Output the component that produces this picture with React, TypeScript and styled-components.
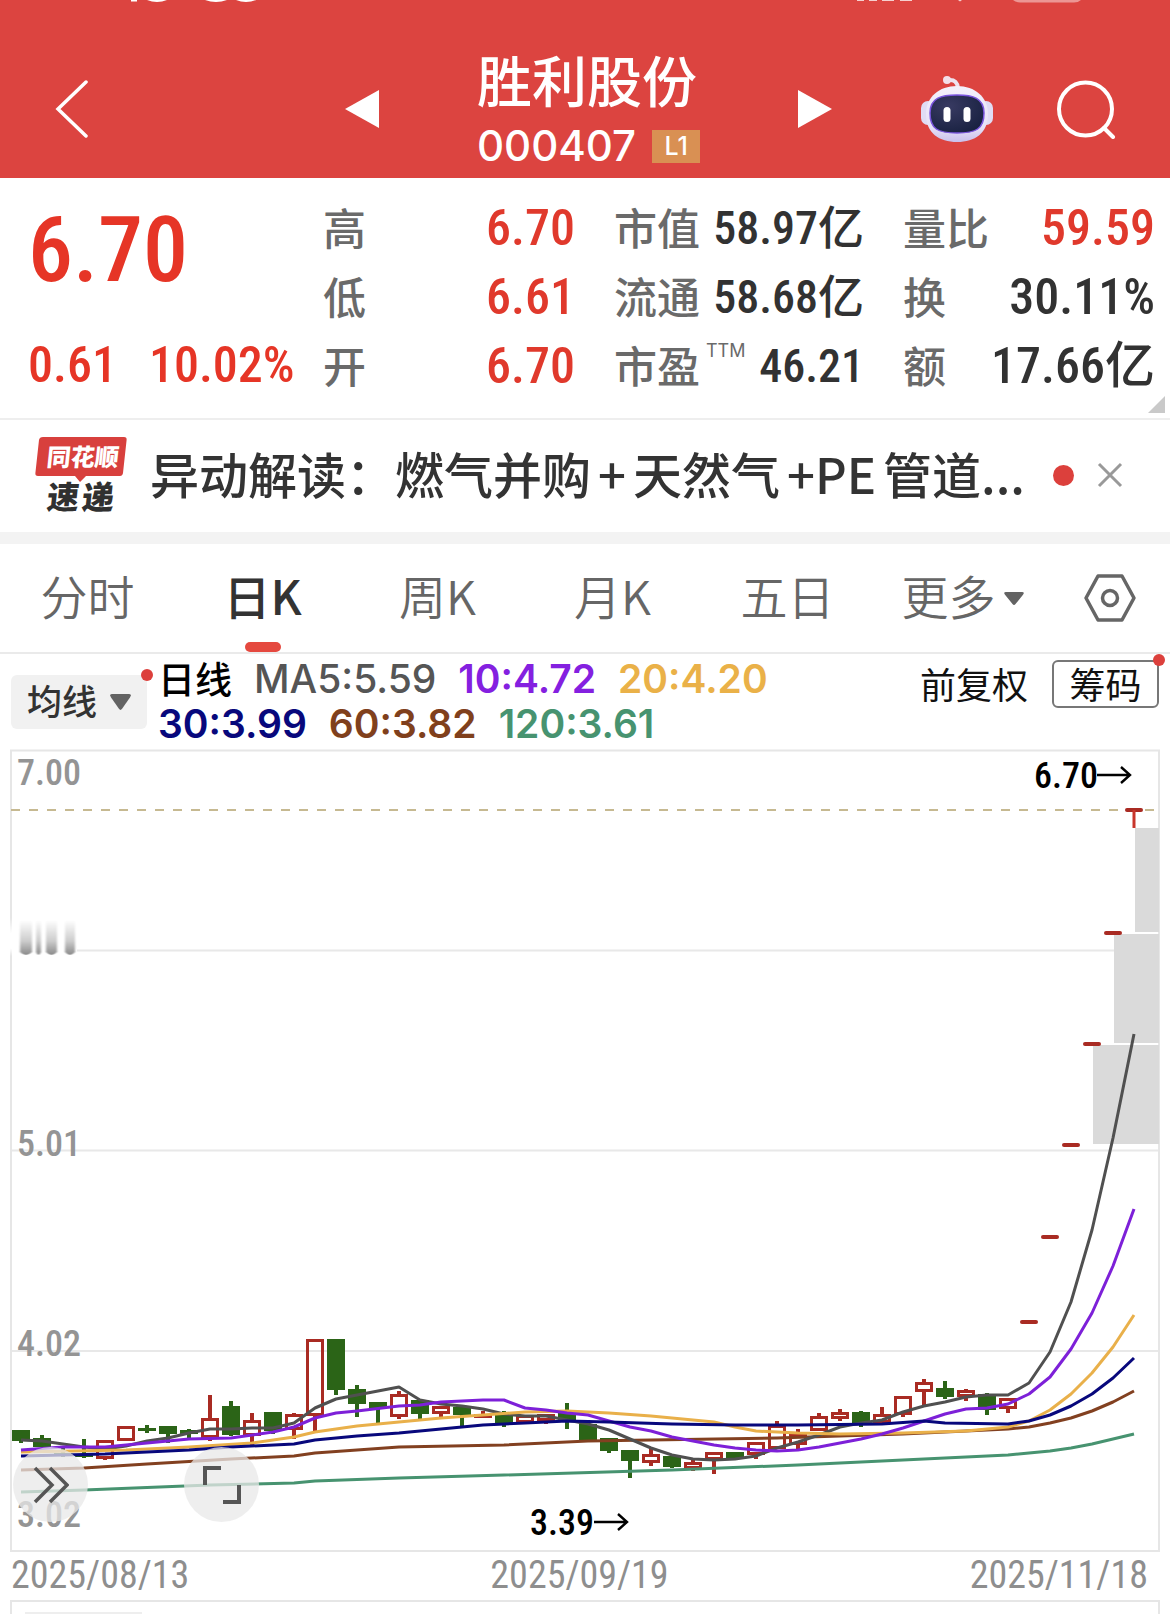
import React from "react";
import styled, { createGlobalStyle } from "styled-components";

const cjk = `"Noto Sans CJK SC", sans-serif`;
const num = `"Roboto Condensed", "Liberation Sans Narrow", Roboto, "Noto Sans CJK SC", sans-serif`;
const ui = `Inter, "Noto Sans CJK SC", sans-serif`;

const Global = createGlobalStyle`
  *, *::before, *::after { box-sizing: border-box; }
  body { margin: 0; background: #fff; font-family: ${cjk}; color: #333; }
  h1, dl, dd, dt, p { margin: 0; font-weight: inherit; }
  button, select { font: inherit; color: inherit; background: none; border: 0; padding: 0; cursor: pointer; }
  a { color: inherit; text-decoration: none; }
  svg { display: block; }
`;

/* ---------- header ---------- */
const Header = styled.header`
  background: #dc4440;
  color: #fff;
  height: 178px;
`;
const StatusBar = styled.div`
  height: 40px;
`;
const NavBar = styled.nav`
  height: 138px;
  padding: 0 53px 0 55px;
  display: grid;
  grid-template-columns: 290px 34px 1fr 122px 137px 60px;
  align-items: center;
`;
const IconButton = styled.button`
  display: flex;
  align-items: center;
`;
const TitleBlock = styled.div`
  justify-self: center;
  display: grid;
  gap: 20px;
  padding-bottom: 6px;
`;
const StockName = styled.h1`
  font-size: 55px;
  line-height: 60px;
  font-weight: 500;
`;
const CodeRow = styled.div`
  display: flex;
  align-items: center;
  gap: 16px;
  font: 500 42px/36px ${ui};
`;
const Badge = styled.span`
  width: 48px;
  height: 33px;
  background: #d99053;
  font-size: 25px;
  line-height: 33px;
  text-align: center;
`;

/* ---------- quote ---------- */
const Quote = styled.section`
  position: relative;
  display: grid;
  grid-template-columns: minmax(0, 256fr) 252fr 250fr 252fr;
  column-gap: 39px;
  padding: 15px 15px 18px 28px;
  border-bottom: 2px solid #eee;
`;
const PriceBlock = styled.div`
  display: grid;
  grid-template-rows: 116px 1fr;
  align-items: center;
  color: #e63526;
  font-family: ${num};
  font-weight: 500;
`;
const Price = styled.strong`
  font-size: 90px;
  line-height: 100px;
  font-weight: 500;
`;
const Change = styled.p`
  display: flex;
  align-self: end;
  gap: 32px;
  margin-bottom: 5px;
  font-size: 50px;
  line-height: 60px;
  white-space: nowrap;
`;
const Figures = styled.dl`
  display: grid;
  grid-auto-rows: 69px;
`;
const Figure = styled.div`
  display: flex;
  align-items: center;
  justify-content: space-between;
`;
const Label = styled.dt`
  padding-bottom: 4px;
  font-size: 43px;
  line-height: 60px;
  font-weight: 500;
  color: #6a6a6a;
  white-space: nowrap;
`;
const Sup = styled.sup`
  font: 400 18px/18px ${ui};
  margin-left: 6px;
  vertical-align: 26px;
`;
const Value = styled.dd<{ $up?: boolean; $small?: boolean }>`
  font-family: ${num};
  font-weight: 500;
  font-size: ${(p) => (p.$small ? 46 : 50)}px;
  line-height: 60px;
  color: ${(p) => (p.$up ? "#e0392c" : "#323232")};
  white-space: nowrap;
`;
const Corner = styled.i`
  position: absolute;
  right: 5px;
  bottom: 5px;
  border-left: 17px solid transparent;
  border-bottom: 17px solid #c9c9c9;
`;

/* ---------- news ---------- */
const News = styled.section`
  display: flex;
  align-items: center;
  height: 112px;
  padding: 0 46px 2px 35px;
`;
const Headline = styled.a`
  flex: 1;
  margin-left: 23px;
  padding-bottom: 4px;
  font-size: 49px;
  line-height: 60px;
  font-weight: 500;
  color: #333;
  white-space: nowrap;
`;
const Plus = styled.span<{ $tight?: boolean }>`
  padding: ${(p) => (p.$tight ? "0 0 0 7px" : "0 7px")};
`;
const Latin = styled.span`
  padding-right: 7px;
`;
const Dot = styled.i<{ $size: number }>`
  display: block;
  width: ${(p) => p.$size}px;
  height: ${(p) => p.$size}px;
  border-radius: 50%;
  background: #dc403c;
`;
const Close = styled(IconButton)`
  margin-left: 22px;
`;
const Band = styled.div`
  height: 12px;
  background: #f3f3f3;
`;

/* ---------- tabs ---------- */
const Tabs = styled.nav`
  display: grid;
  grid-template-columns: repeat(6, 1fr) 120px;
  height: 110px;
  border-bottom: 2px solid #eaeaea;
`;
const Tab = styled.button<{ $active?: boolean }>`
  position: relative;
  display: flex;
  align-items: center;
  justify-content: center;
  gap: 8px;
  font-size: 47px;
  line-height: 60px;
  font-weight: ${(p) => (p.$active ? 500 : 350)};
  color: ${(p) => (p.$active ? "#333" : "#666")};
  &::after {
    content: "";
    display: ${(p) => (p.$active ? "block" : "none")};
    position: absolute;
    bottom: 0;
    width: 36px;
    height: 10px;
    border-radius: 5px;
    background: #e5493f;
  }
`;
const TabText = styled.span`
  padding-bottom: 7px;
`;

/* ---------- averages ---------- */
const Averages = styled.section`
  display: flex;
  align-items: flex-start;
  height: 95px;
  padding: 0 11px;
`;
const Picker = styled.label`
  position: relative;
  margin-top: 21px;
  width: 136px;
  height: 54px;
  border-radius: 6px;
  background: #f1f1f1;
  display: flex;
  align-items: center;
  padding: 0 16px;
  svg { flex: none; pointer-events: none; }
`;
const Select = styled.select`
  appearance: none;
  flex: 1;
  padding-bottom: 4px;
  font-size: 35px;
  line-height: 50px;
  font-weight: 500;
  color: #333;
`;
const CornerDot = styled(Dot)<{ $out: number }>`
  position: absolute;
  top: ${(p) => -p.$out}px;
  right: ${(p) => -p.$out}px;
`;
const Legend = styled.div`
  flex: 1;
  margin-left: 11px;
  padding-top: 2px;
  font: 600 39px/45px ${ui};
`;
const LegendRow = styled.div`
  display: flex;
  gap: 22px;
  height: 45px;
  white-space: nowrap;
`;
const LegendTitle = styled.span`
  font: 500 37px/45px ${cjk};
  color: #000;
`;
const LegendItem = styled.span<{ $c: string; $light?: boolean }>`
  color: ${(p) => p.$c};
  font-weight: ${(p) => (p.$light ? 500 : 600)};
`;
const Tools = styled.div`
  display: flex;
  align-items: center;
  gap: 24px;
  margin-top: 6px;
  font-size: 36px;
  line-height: 42px;
  color: #111;
`;
const Adjust = styled.button`
  padding-bottom: 2px;
`;
const Chips = styled.button`
  position: relative;
  width: 107px;
  height: 48px;
  padding-bottom: 2px;
  border: 2px solid #777;
  border-radius: 6px;
`;

/* ---------- chart ---------- */
const ChartWrap = styled.figure`
  position: relative;
  margin: 0 10px;
  svg.plot { width: 100%; height: auto; }
`;
const Float = styled.button<{ $left: number }>`
  position: absolute;
  left: ${(p) => p.$left}px;
  bottom: 30px;
  width: 75px;
  height: 75px;
  border-radius: 50%;
  background: rgba(232, 232, 232, 0.75);
  display: grid;
  place-items: center;
`;
const Dates = styled.div`
  display: flex;
  justify-content: space-between;
  height: 48px;
  padding: 0 22px 0 11px;
  font: 400 38px/46px ${num};
  color: #8e8e8e;
`;
const NextPanel = styled.section`
  height: 15px;
  margin: 0 10px;
  padding: 10px 13px 0;
  border: 2px solid #e6e6e6;
  border-bottom: 0;
`;
const NextTag = styled.div`
  width: 117px;
  height: 3px;
  background: #eee;
`;

type Candle = [up: 0 | 1, top: number, bottom: number, high?: number, low?: number];
const candles: Candle[] = [
  [0, 1430, 1441, 1430, 1443], [0, 1438, 1447, 1435, 1447], [0, 1453, 1456, 1447, 1457], [0, 1454, 1457, 1439, 1458],
  [1, 1440, 1459, 1440, 1460], [1, 1426, 1441], [0, 1428, 1431, 1425, 1433], [0, 1426, 1434, 1426, 1443],
  [0, 1430, 1434, 1429, 1440], [1, 1418, 1438, 1395, 1441], [0, 1406, 1435, 1401, 1436], [1, 1420, 1436, 1413, 1445],
  [0, 1412, 1431, 1412, 1434], [1, 1414, 1430, 1413, 1439], [1, 1339, 1416, 1339, 1431], [0, 1339, 1390, 1339, 1395],
  [0, 1389, 1404, 1385, 1417], [0, 1402, 1408, 1402, 1423], [1, 1394, 1417, 1391, 1419], [0, 1400, 1414, 1400, 1419],
  [1, 1406, 1414, 1406, 1419], [0, 1407, 1415, 1407, 1427], [1, 1414, 1418, 1411, 1418], [0, 1412, 1423, 1411, 1427],
  [1, 1415, 1423], [1, 1414, 1421, 1414, 1424], [0, 1413, 1420, 1403, 1429], [0, 1424, 1440],
  [0, 1438, 1451, 1438, 1453], [0, 1450, 1461, 1450, 1478], [1, 1454, 1463, 1447, 1466], [0, 1456, 1467, 1456, 1468],
  [1, 1462, 1469, 1458, 1471], [1, 1452, 1460, 1452, 1474], [0, 1452, 1459], [1, 1442, 1455, 1442, 1459],
  [1, 1425, 1449, 1421, 1449], [1, 1434, 1445, 1429, 1449], [1, 1416, 1431, 1413, 1431], [1, 1412, 1419, 1409, 1421],
  [0, 1412, 1423, 1411, 1427], [1, 1414, 1423, 1407, 1423], [1, 1396, 1415, 1396, 1417], [1, 1382, 1392, 1379, 1406],
  [0, 1388, 1397, 1381, 1399], [1, 1390, 1397, 1389, 1401], [0, 1394, 1410, 1393, 1415], [1, 1398, 1409, 1398, 1413],
];
const limitUps = [1322, 1237, 1145, 1044, 933, 810];
const gaps = [[1135, 828, 104], [1114, 934, 109], [1093, 1045, 99]];
const averages = [
  { c: "#479370", p: "21,1492 84,1490 210,1485 294,1483 315,1481 399,1478 504,1475 672,1470 798,1465 903,1460 1008,1455 1029,1453 1050,1451 1071,1448 1092,1444 1134,1434" },
  { c: "#824020", p: "21,1470 84,1468 147,1464 231,1459 294,1456 315,1453 399,1447 504,1445 588,1441 651,1440 777,1438 903,1434 966,1431 1008,1429 1029,1427 1050,1423 1071,1418 1092,1411 1113,1402 1134,1391" },
  { c: "#505050", p: "21,1440 42,1441 63,1444 84,1447 105,1449 126,1446 147,1441 168,1438 189,1433 210,1429 231,1429 252,1428 273,1428 294,1423 315,1408 336,1399 357,1395 378,1391 399,1387 420,1400 441,1404 462,1406 483,1409 504,1414 525,1416 546,1416 567,1420 588,1424 609,1430 630,1439 651,1448 672,1455 693,1459 714,1460 735,1459 756,1456 777,1448 798,1442 819,1435 840,1427 861,1423 882,1420 903,1412 924,1406 945,1402 966,1397 987,1395 1008,1395 1029,1383 1050,1352 1071,1302 1092,1230 1113,1138 1134,1034" },
  { c: "#e9b04a", p: "21,1452 126,1450 189,1447 252,1443 294,1437 315,1432 357,1426 399,1422 441,1418 483,1415 525,1412 567,1411 609,1413 651,1416 693,1420 714,1422 735,1427 756,1431 798,1433 840,1434 903,1433 966,1431 1008,1427 1029,1421 1050,1410 1071,1394 1092,1373 1113,1347 1134,1315" },
  { c: "#7d20d8", p: "21,1450 63,1447 105,1447 147,1443 189,1439 231,1438 273,1432 294,1427 315,1418 336,1413 357,1411 399,1406 420,1405 441,1402 462,1401 483,1400 504,1400 525,1408 546,1410 567,1413 588,1415 609,1421 630,1427 651,1431 672,1437 693,1441 714,1445 735,1448 756,1450 777,1451 798,1450 819,1447 840,1443 861,1439 882,1434 903,1428 924,1421 945,1414 966,1409 987,1408 1008,1404 1029,1394 1050,1377 1071,1349 1092,1313 1113,1266 1134,1209" },
  { c: "#08087c", p: "21,1456 105,1454 189,1450 231,1447 294,1444 315,1440 357,1436 399,1433 441,1429 483,1425 525,1423 567,1421 609,1422 672,1424 735,1425 798,1425 882,1424 924,1421 945,1423 1008,1424 1029,1421 1050,1415 1071,1406 1092,1394 1113,1378 1134,1358" },
];
const green = "#2b6417";
const red = "#a92b23";
const xOf = (i: number) => 21 + i * 21;

const CandleMark = ({ i, data }: { i: number; data: Candle }) => {
  const [up, top, bottom, high = top, low = bottom] = data;
  const x = xOf(i);
  if (!up)
    return (
      <g fill={green}>
        <rect x={x - 9} y={top} width={18} height={bottom - top} />
        <rect x={x - 2} y={high} width={4} height={low - high} />
      </g>
    );
  return (
    <g stroke={red} strokeWidth={3} fill="none">
      <rect x={x - 7.5} y={top + 1.5} width={15} height={Math.max(bottom - top - 3, 1)} />
      <path d={`M${x} ${high}V${top}M${x} ${bottom}V${low}`} strokeWidth={4} />
    </g>
  );
};

const Chart = () => (
  <svg className="plot" viewBox="10 749 1150 803" role="img" aria-label="日K线图">
    <defs>
      <linearGradient id="fade" x1="0" y1="0" x2="0" y2="1">
        <stop offset="0" stopColor="#fff" />
        <stop offset="0.6" stopColor="#ccc" />
        <stop offset="1" stopColor="#8a8a8a" />
      </linearGradient>
      <linearGradient id="edge" x1="0" y1="0" x2="0" y2="1">
        <stop offset="0" stopColor="#fff" stopOpacity="0" />
        <stop offset="0.4" stopColor="#fff" />
        <stop offset="0.8" stopColor="#fff" />
        <stop offset="1" stopColor="#fff" stopOpacity="0" />
      </linearGradient>
      <filter id="soft" x="-20%" y="-20%" width="140%" height="140%">
        <feGaussianBlur stdDeviation="1 0.5" />
      </filter>
    </defs>
    <path d="M77 950.5H1159M11 1150.5H1159M11 1351H1159" stroke="#e8e8e8" strokeWidth="2" />
    <rect x="11" y="750.5" width="1148" height="800.5" fill="none" stroke="#e6e6e6" strokeWidth="2" />
    <rect x="8" y="918" width="8" height="38" fill="url(#edge)" />
    {gaps.map(([x, y, h]) => (
      <rect key={x} x={x} y={y} width={1159 - x} height={h} fill="#dadada" />
    ))}
    <path d="M11 810H1158" stroke="#c6b991" strokeWidth="2" strokeDasharray="9 9" />
    <g fontFamily={num} fontSize="36" fontWeight="500" fill="#949494">
      <text x="17" y="785">7.00</text>
      <text x="17" y="1156">5.01</text>
      <text x="17" y="1356">4.02</text>
      <text x="17" y="1527">3.02</text>
    </g>
    <g filter="url(#soft)">
      {[[20, 12], [36, 5], [46, 11], [65, 10]].map(([x, w]) => (
        <path key={x} d={`M${x} 920h${w}v32q${-w / 2} 6 ${-w} 0z`} fill="url(#fade)" />
      ))}
    </g>
    {candles.map((c, i) => (
      <CandleMark key={i} i={i} data={c} />
    ))}
    {averages.map((a) => (
      <polyline key={a.c} points={a.p} fill="none" stroke={a.c} strokeWidth="3" strokeLinejoin="round" />
    ))}
    {limitUps.map((y, i) => (
      <path key={y} d={`M${xOf(48 + i) - 7} ${y}h14`} stroke={red} strokeWidth="4" strokeLinecap="round" />
    ))}
    <path d="M1134 810v18" stroke="#c8352b" strokeWidth="3" />
    <g fontFamily={num} fontSize="36" fontWeight="500" fill="#000">
      <text x="1034" y="788">6.70</text>
      <text x="530" y="1535">3.39</text>
    </g>
    <path d="M1097 775h33m-9-8l9 8l-9 8M594 1522h33m-9-8l9 8l-9 8" stroke="#000" strokeWidth="2.4" fill="none" />
  </svg>
);

const Robot = () => (
  <svg width="74" height="68" viewBox="920 75 74 68">
    <defs>
      <linearGradient id="shell" x1="0" y1="0" x2="0" y2="1">
        <stop offset="0" stopColor="#f4f1fb" />
        <stop offset="0.75" stopColor="#e6e0f6" />
        <stop offset="1" stopColor="#c9c0ec" />
      </linearGradient>
      <radialGradient id="visor" cx="0.35" cy="0.3" r="0.8">
        <stop offset="0" stopColor="#383a62" />
        <stop offset="1" stopColor="#17203f" />
      </radialGradient>
    </defs>
    <path d="M948 80q9-1 10 8" stroke="#eee3ef" strokeWidth="4" fill="none" />
    <circle cx="947" cy="80" r="4" fill="#f3dfe9" />
    <rect x="921" y="101" width="14" height="24" rx="7" fill="#e0dcf4" />
    <rect x="979" y="101" width="14" height="24" rx="7" fill="#e0dcf4" />
    <path d="M957 86C975 86 988 97 988 114C988 133 975 142 957 142C939 142 926 133 926 114C926 97 939 86 957 86Z" fill="url(#shell)" />
    <path d="M957 95C973 95 984 98 984 113C984 129 976 133 957 133C938 133 930 129 930 113C930 98 941 95 957 95Z" fill="url(#visor)" stroke="#7a55dd" strokeWidth="1.5" />
    <rect x="943.5" y="107" width="7" height="15" rx="3.5" fill="#fff" />
    <rect x="963.5" y="107" width="7" height="15" rx="3.5" fill="#fff" />
  </svg>
);

const Logo = () => (
  <svg width="92" height="76" viewBox="35 437 92 76" overflow="visible" aria-label="同花顺速递">
    <path d="M43 437H124q3 0 2.6 3L123 473q-.5 3-3 3H86l-6 6l-5-6H38q-3 0-2.6-3L39 440q.5-3 4-3Z" fill="#d8403d" />
    <g fontFamily={cjk} fontWeight="900">
      <text x="46" y="466" transform="skewX(-6)" style={{ transformOrigin: "80px 467px" }} fontSize="24" fill="#fff">同花顺</text>
      <text x="46 81" y="509" transform="skewX(-6)" style={{ transformOrigin: "80px 509px" }} fontSize="32" fill="#303030">速递</text>
    </g>
  </svg>
);

const Down = ({ w, h }: { w: number; h: number }) => (
  <svg width={w} height={h} viewBox="0 0 20 14" preserveAspectRatio="none">
    <path d="M2 0H18Q21 0 19 3L11.5 13Q10 15 8.5 13L1 3Q-1 0 2 0Z" fill="#636363" />
  </svg>
);

type Fig = { label: string; sup?: string; value: string; up?: boolean };
const columns: { small?: boolean; rows: Fig[] }[] = [
  { rows: [{ label: "高", value: "6.70", up: true }, { label: "低", value: "6.61", up: true }, { label: "开", value: "6.70", up: true }] },
  { small: true, rows: [{ label: "市值", value: "58.97亿" }, { label: "流通", value: "58.68亿" }, { label: "市盈", sup: "TTM", value: "46.21" }] },
  { rows: [{ label: "量比", value: "59.59", up: true }, { label: "换", value: "30.11%" }, { label: "额", value: "17.66亿" }] },
];

export default function App() {
  return (
    <>
      <Global />
      <Header>
        <StatusBar>
          <svg width="100%" height="3" viewBox="0 0 1170 3" preserveAspectRatio="none" aria-hidden="true">
            <path d="M131 0h6v1.5h-6zM147 0q10 4 20 0zM205 0q11 4 22 0zM236 0q10 4 20 0z" fill="#fff" />
            <path d="M857 0h7v1h-7zM869 0h8v1h-8zM882 0h12v1h-12zM900 0h12v1h-12zM958 0h4l-2 1.5z" fill="#f6cfce" />
            <path d="M1013 0H1081q-3 2.5-7 2.5H1020q-4 0-7-2.5z" fill="#ec9694" />
          </svg>
        </StatusBar>
        <NavBar>
          <IconButton aria-label="返回">
            <svg width="34" height="58" viewBox="0 0 34 58"><path d="M31 2L3 29L31 56" fill="none" stroke="#fff" strokeWidth="3.5" strokeLinecap="round" /></svg>
          </IconButton>
          <IconButton aria-label="上一只">
            <svg width="34" height="38" viewBox="0 0 34 38"><path d="M0 19L34 0V38Z" fill="#fff" /></svg>
          </IconButton>
          <TitleBlock>
            <StockName>胜利股份</StockName>
            <CodeRow>000407<Badge>L1</Badge></CodeRow>
          </TitleBlock>
          <IconButton aria-label="下一只">
            <svg width="34" height="38" viewBox="0 0 34 38"><path d="M34 19L0 0V38Z" fill="#fff" /></svg>
          </IconButton>
          <IconButton aria-label="智能助手">
            <Robot />
          </IconButton>
          <IconButton aria-label="搜索">
            <svg width="60" height="60" viewBox="0 0 60 60" fill="none" stroke="#fff" strokeWidth="4" strokeLinecap="round">
              <circle cx="28.5" cy="30" r="26.5" />
              <path d="M47 49L56 58" />
            </svg>
          </IconButton>
        </NavBar>
      </Header>
      <Quote>
        <PriceBlock>
          <Price>6.70</Price>
          <Change><span>0.61</span><span>10.02%</span></Change>
        </PriceBlock>
        {columns.map((col, n) => (
          <Figures key={n}>
            {col.rows.map((f) => (
              <Figure key={f.label}>
                <Label>{f.label}{f.sup && <Sup>{f.sup}</Sup>}</Label>
                <Value $up={f.up} $small={col.small}>{f.value}</Value>
              </Figure>
            ))}
          </Figures>
        ))}
        <Corner />
      </Quote>
      <News>
        <Logo />
        <Headline href="#news">异动解读：燃气并购<Plus>+</Plus>天然气<Plus $tight>+</Plus><Latin>PE</Latin>管道...</Headline>
        <Dot $size={21} />
        <Close aria-label="关闭">
          <svg width="28" height="28" viewBox="0 0 28 28"><path d="M3 3L25 25M25 3L3 25" stroke="#999" strokeWidth="3" /></svg>
        </Close>
      </News>
      <Band />
      <Tabs>
        <Tab><TabText>分时</TabText></Tab>
        <Tab $active><TabText>日K</TabText></Tab>
        <Tab><TabText>周K</TabText></Tab>
        <Tab><TabText>月K</TabText></Tab>
        <Tab><TabText>五日</TabText></Tab>
        <Tab><TabText>更多</TabText><Down w={20} h={13} /></Tab>
        <Tab aria-label="设置">
          <svg width="52" height="48" viewBox="0 0 52 48" fill="none" stroke="#666" strokeWidth="3.5" strokeLinejoin="round">
            <path d="M14 2H38L50 24L38 46H14L2 24Z" />
            <circle cx="26" cy="24" r="7.5" />
          </svg>
        </Tab>
      </Tabs>
      <Averages>
        <Picker>
          <Select aria-label="指标"><option>均线</option></Select>
          <Down w={21} h={16} />
          <CornerDot $size={12} $out={6} />
        </Picker>
        <Legend>
          <LegendRow>
            <LegendTitle>日线</LegendTitle>
            <LegendItem $c="#555" $light>MA5:5.59</LegendItem>
            <LegendItem $c="#8420e0">10:4.72</LegendItem>
            <LegendItem $c="#eab148">20:4.20</LegendItem>
          </LegendRow>
          <LegendRow>
            <LegendItem $c="#08087c">30:3.99</LegendItem>
            <LegendItem $c="#80401c">60:3.82</LegendItem>
            <LegendItem $c="#479370">120:3.61</LegendItem>
          </LegendRow>
        </Legend>
        <Tools>
          <Adjust>前复权</Adjust>
          <Chips>筹码<CornerDot $size={12} $out={8} /></Chips>
        </Tools>
      </Averages>
      <ChartWrap>
        <Chart />
        <Float $left={3} aria-label="展开">
          <svg width="36" height="38" viewBox="0 0 36 38" fill="none" stroke="#555" strokeWidth="3.5"><path d="M2 2L19 19L2 36M17 2L34 19L17 36" /></svg>
        </Float>
        <Float $left={174} aria-label="全屏">
          <svg width="38" height="38" viewBox="0 0 38 38" fill="none" stroke="#555" strokeWidth="4"><path d="M2 19V2H18M36 19V36H20" /></svg>
        </Float>
      </ChartWrap>
      <Dates><span>2025/08/13</span><span>2025/09/19</span><span>2025/11/18</span></Dates>
      <NextPanel><NextTag /></NextPanel>
    </>
  );
}
